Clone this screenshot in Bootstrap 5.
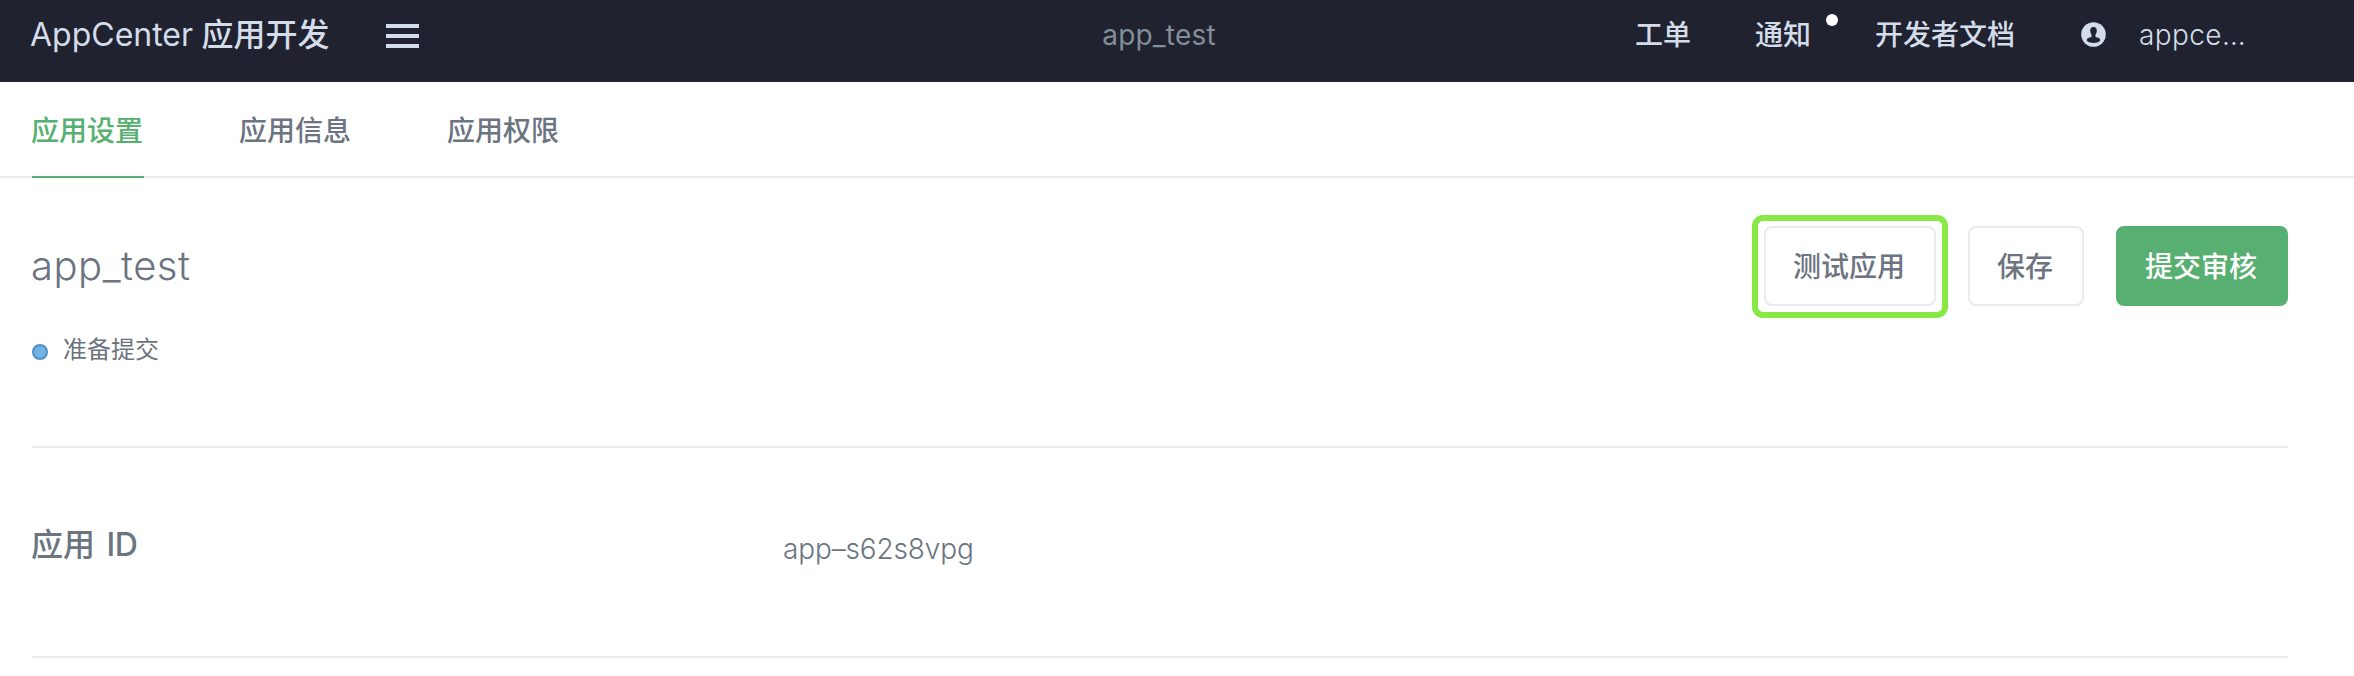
<!DOCTYPE html>
<html lang="zh-CN">
<head>
<meta charset="utf-8">
<title>AppCenter 应用开发</title>
<link rel="stylesheet" href="https://cdn.jsdelivr.net/npm/bootstrap@5.3.0/dist/css/bootstrap.min.css">
<style>
body{font-family:Inter,"Noto Sans CJK SC",sans-serif;font-size:28px;line-height:40px;color:#6b7480;background:#fff}
.topbar{height:82px;padding:15px 106px 27px 30px;background:#202230;color:#d3dce9;display:grid;grid-template-columns:1fr auto 1fr;font-weight:500}
.brand-name{font-size:32px;font-weight:500;white-space:pre;width:300px}
.brand-name .latin{font-weight:400}
.menu-toggle{margin-left:56px;width:33px;height:24px;margin-top:9px}
.menu-toggle span{height:4px;background:#d3dce9}
.app-name{color:#828e99;font-weight:400;margin-left:40px;letter-spacing:.2px}
.notice-dot{width:12px;height:12px;background:#fff;top:-1px;right:-27px}
.user-name{margin-left:33px;width:109px;font-weight:300;letter-spacing:.4px}
.tabs{height:96px;gap:96px;padding:0 32px;border-bottom:2px solid #eaebf1}
.tabs .nav-link{width:112px;white-space:nowrap;padding:29px 0 25px;height:96px;color:#6b7480;border-bottom:2px solid transparent;font-weight:500;text-indent:-1px}
.tabs .nav-link.active{color:#56b06f;border-color:#56b06f}
.page{padding:0 66px 0 32px}
.summary{height:270px;border-bottom:2px solid #eaebf1;padding-top:37px}
.summary h1{font-size:40px;font-weight:300;line-height:48px;margin:27px 0 0 -1px;letter-spacing:.5px}
.status{font-size:24px;font-weight:400;margin-top:42px;line-height:36px}
.status i{width:16px;height:16px;background:#70b2e1;border:2px solid #4b92c8;margin:4px 15px 0 0}
.btn{--bs-btn-font-size:28px;--bs-btn-font-weight:500;--bs-btn-line-height:40px;height:80px;padding:19px 29px 17px 27px;border-width:2px;border-radius:8px}
.btn-plain{color:#6b7480;background:#fff;border-color:#eaebf1}
.btn-go{color:#fff;background:#58af72;border-color:#58af72}
.highlight{border:6px solid #88e846;border-radius:11px;padding:5px 6px 6px;margin-right:20px;height:103px}
.field{height:210px;border-bottom:2px solid #eaebf1}
.field-label{width:751px;font-size:32px;font-weight:500;padding-top:77px;text-indent:-1px;word-spacing:3px}
.field-label .latin{letter-spacing:-.5px}
.field-value{font-weight:300;padding-top:81px;letter-spacing:-.15px}
</style>
</head>
<body>
<header class="topbar">
  <div class="d-flex align-items-start">
    <div class="brand-name"><span class="latin">AppCenter</span> 应用开发</div>
    <div class="menu-toggle d-flex flex-column justify-content-between"><span></span><span></span><span></span></div>
  </div>
  <div class="app-name">app_test</div>
  <nav class="d-flex justify-content-end">
    <span>工单</span>
    <span class="position-relative" style="margin-left:64px">通知<i class="notice-dot position-absolute rounded-circle"></i></span>
    <span style="margin-left:64px">开发者文档</span>
    <svg style="margin:7px 0 0 66px" width="25" height="25" viewBox="0 0 25 25"><circle cx="12.5" cy="12.5" r="12.3" fill="#d3dce9"/><path fill="#202230" d="M12.5 5c-2.5 0-3.5 1.8-3.3 4.100.1 1.500.6 2.500 1.300 3.500v2.300c-2.400.4-4.600 1.200-4.700 2.900-.1 2.100 3.200 3.100 6.700 3.100s6.800-1 6.700-3.100c-.1-1.700-2.300-2.500-4.700-2.900v-2.300c.7-1 1.200-2 1.300-3.500.2-2.300-.8-4.100-3.300-4.100z"/></svg>
    <span class="user-name">appce…</span>
  </nav>
</header>
<nav class="tabs nav flex-nowrap">
  <a class="nav-link active" href="#">应用设置</a>
  <a class="nav-link" href="#">应用信息</a>
  <a class="nav-link" href="#">应用权限</a>
</nav>
<main class="page">
  <section class="summary d-flex justify-content-between align-items-start">
    <div>
      <h1>app_test</h1>
      <div class="status d-flex align-items-center"><i class="rounded-circle"></i>准备提交</div>
    </div>
    <div class="d-flex align-items-start">
      <div class="highlight"><button class="btn btn-plain">测试应用</button></div>
      <button class="btn btn-plain" style="margin:11px 32px 0 0">保存</button>
      <button class="btn btn-go" style="margin-top:11px">提交审核</button>
    </div>
  </section>
  <section class="field d-flex">
    <div class="field-label">应用 <span class="latin">ID</span></div>
    <div class="field-value">app–s62s8vpg</div>
  </section>
</main>
<script src="https://cdn.jsdelivr.net/npm/bootstrap@5.3.0/dist/js/bootstrap.bundle.min.js"></script>
</body>
</html>
